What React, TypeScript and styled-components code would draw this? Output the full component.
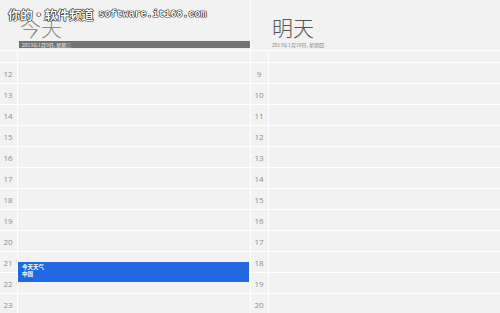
import React from "react";
import styled, { createGlobalStyle } from "styled-components";

const Global = createGlobalStyle`
  *, *::before, *::after { box-sizing: border-box; }
  html, body { margin: 0; padding: 0; background: #f2f2f2; }
  body { font-family: "Open Sans", "Noto Sans CJK SC", sans-serif; }
`;

const Screen = styled.div`
  position: relative;
  width: 500px;
  height: 313px;
  overflow: hidden;
  background: #f2f2f2;
  display: flex;
`;

const Pane = styled.div<{ $w: number }>`
  width: ${(p) => p.$w}px;
  flex: none;
  display: flex;
  flex-direction: column;
`;

const Divider = styled.div`
  width: 1px;
  flex: none;
  background: #ffffff;
`;

const Header = styled.div`
  height: 50px;
  flex: none;
  padding-left: 19px;
  display: flex;
  flex-direction: column;
  justify-content: flex-end;
`;

const Title = styled.div<{ $color: string; $indent: number }>`
  font-family: "Noto Sans CJK SC", sans-serif;
  font-weight: 300;
  font-size: 21px;
  line-height: 22px;
  color: ${(p) => p.$color};
  padding-left: ${(p) => p.$indent}px;
  margin-bottom: 3px;
`;

const DateBar = styled.div<{ $filled: boolean }>`
  height: 7px;
  margin-bottom: 2px;
  background: ${(p) => (p.$filled ? "#747474" : "transparent")};
  color: ${(p) => (p.$filled ? "#ececec" : "#8a8a8a")};
  font-family: "Noto Sans CJK SC", sans-serif;
  font-size: 5px;
  line-height: 7px;
  padding-left: ${(p) => (p.$filled ? 3 : 2)}px;
  white-space: nowrap;
`;

const Row = styled.div<{ $h: number }>`
  height: ${(p) => p.$h}px;
  flex: none;
  border-top: 1px solid #ffffff;
  display: flex;
`;

const Label = styled.div`
  width: 18px;
  flex: none;
  border-right: 1px solid #ffffff;
  font-family: "Open Sans", sans-serif;
  font-size: 8px;
  color: #8c8c8c;
  display: flex;
  align-items: center;
  justify-content: center;
  padding-right: 1px;
`;

const Cell = styled.div`
  flex: 1;
  position: relative;
`;

const Event = styled.div`
  position: absolute;
  left: 0;
  right: 1px;
  top: 10px;
  height: 20px;
  z-index: 2;
  background: #2068e2;
  color: #ffffff;
  font-family: "Noto Sans CJK SC", sans-serif;
  font-weight: 700;
  font-size: 5.5px;
  line-height: 7px;
  padding: 2px 0 0 4px;
`;

const Watermark = styled.div`
  position: absolute;
  left: 8px;
  top: 5px;
  display: flex;
  align-items: center;
  gap: 5px;
  color: #ffffff;
  font-weight: 700;
  -webkit-text-stroke: 0.6px #000;
  paint-order: stroke fill;
  text-shadow: 0 0 1px #000, 0 0 1px #000;
  white-space: nowrap;
  z-index: 5;
`;

const WmCn = styled.span`
  font-family: "Noto Sans CJK SC", sans-serif;
  font-size: 12.5px;
  letter-spacing: -0.3px;
`;

const WmEn = styled.span`
  font-family: "Liberation Mono", monospace;
  font-size: 10px;
`;

type Day = {
  title: string;
  color: string;
  date: string;
  filled: boolean;
  start: number;
  event?: number;
  width: number;
  indent: number;
};

const days: Day[] = [
  { title: "今天", color: "#8a8a8a", date: "2013年1月9日, 星期三", filled: true, start: 12, event: 21, width: 250, indent: 1 },
  { title: "明天", color: "#555555", date: "2013年1月10日, 星期四", filled: false, start: 9, width: 249, indent: 2 },
];

function DayPane({ d }: { d: Day }) {
  const hours = Array.from({ length: 12 }, (_, i) => d.start + i);
  return (
    <Pane $w={d.width}>
      <Header>
        <Title $color={d.color} $indent={d.indent}>{d.title}</Title>
        <DateBar $filled={d.filled}>{d.date}</DateBar>
      </Header>
      <Row $h={12}>
        <Label />
        <Cell />
      </Row>
      {hours.map((h) => (
        <Row key={h} $h={21}>
          <Label>{h}</Label>
          <Cell>
            {d.event === h && (
              <Event>
                今天天气
                <br />
                中国
              </Event>
            )}
          </Cell>
        </Row>
      ))}
    </Pane>
  );
}

export default function App() {
  return (
    <Screen>
      <Global />
      <DayPane d={days[0]} />
      <Divider />
      <DayPane d={days[1]} />
      <Watermark>
        <WmCn>你的·软件频道</WmCn>
        <WmEn>software.it168.com</WmEn>
      </Watermark>
    </Screen>
  );
}
